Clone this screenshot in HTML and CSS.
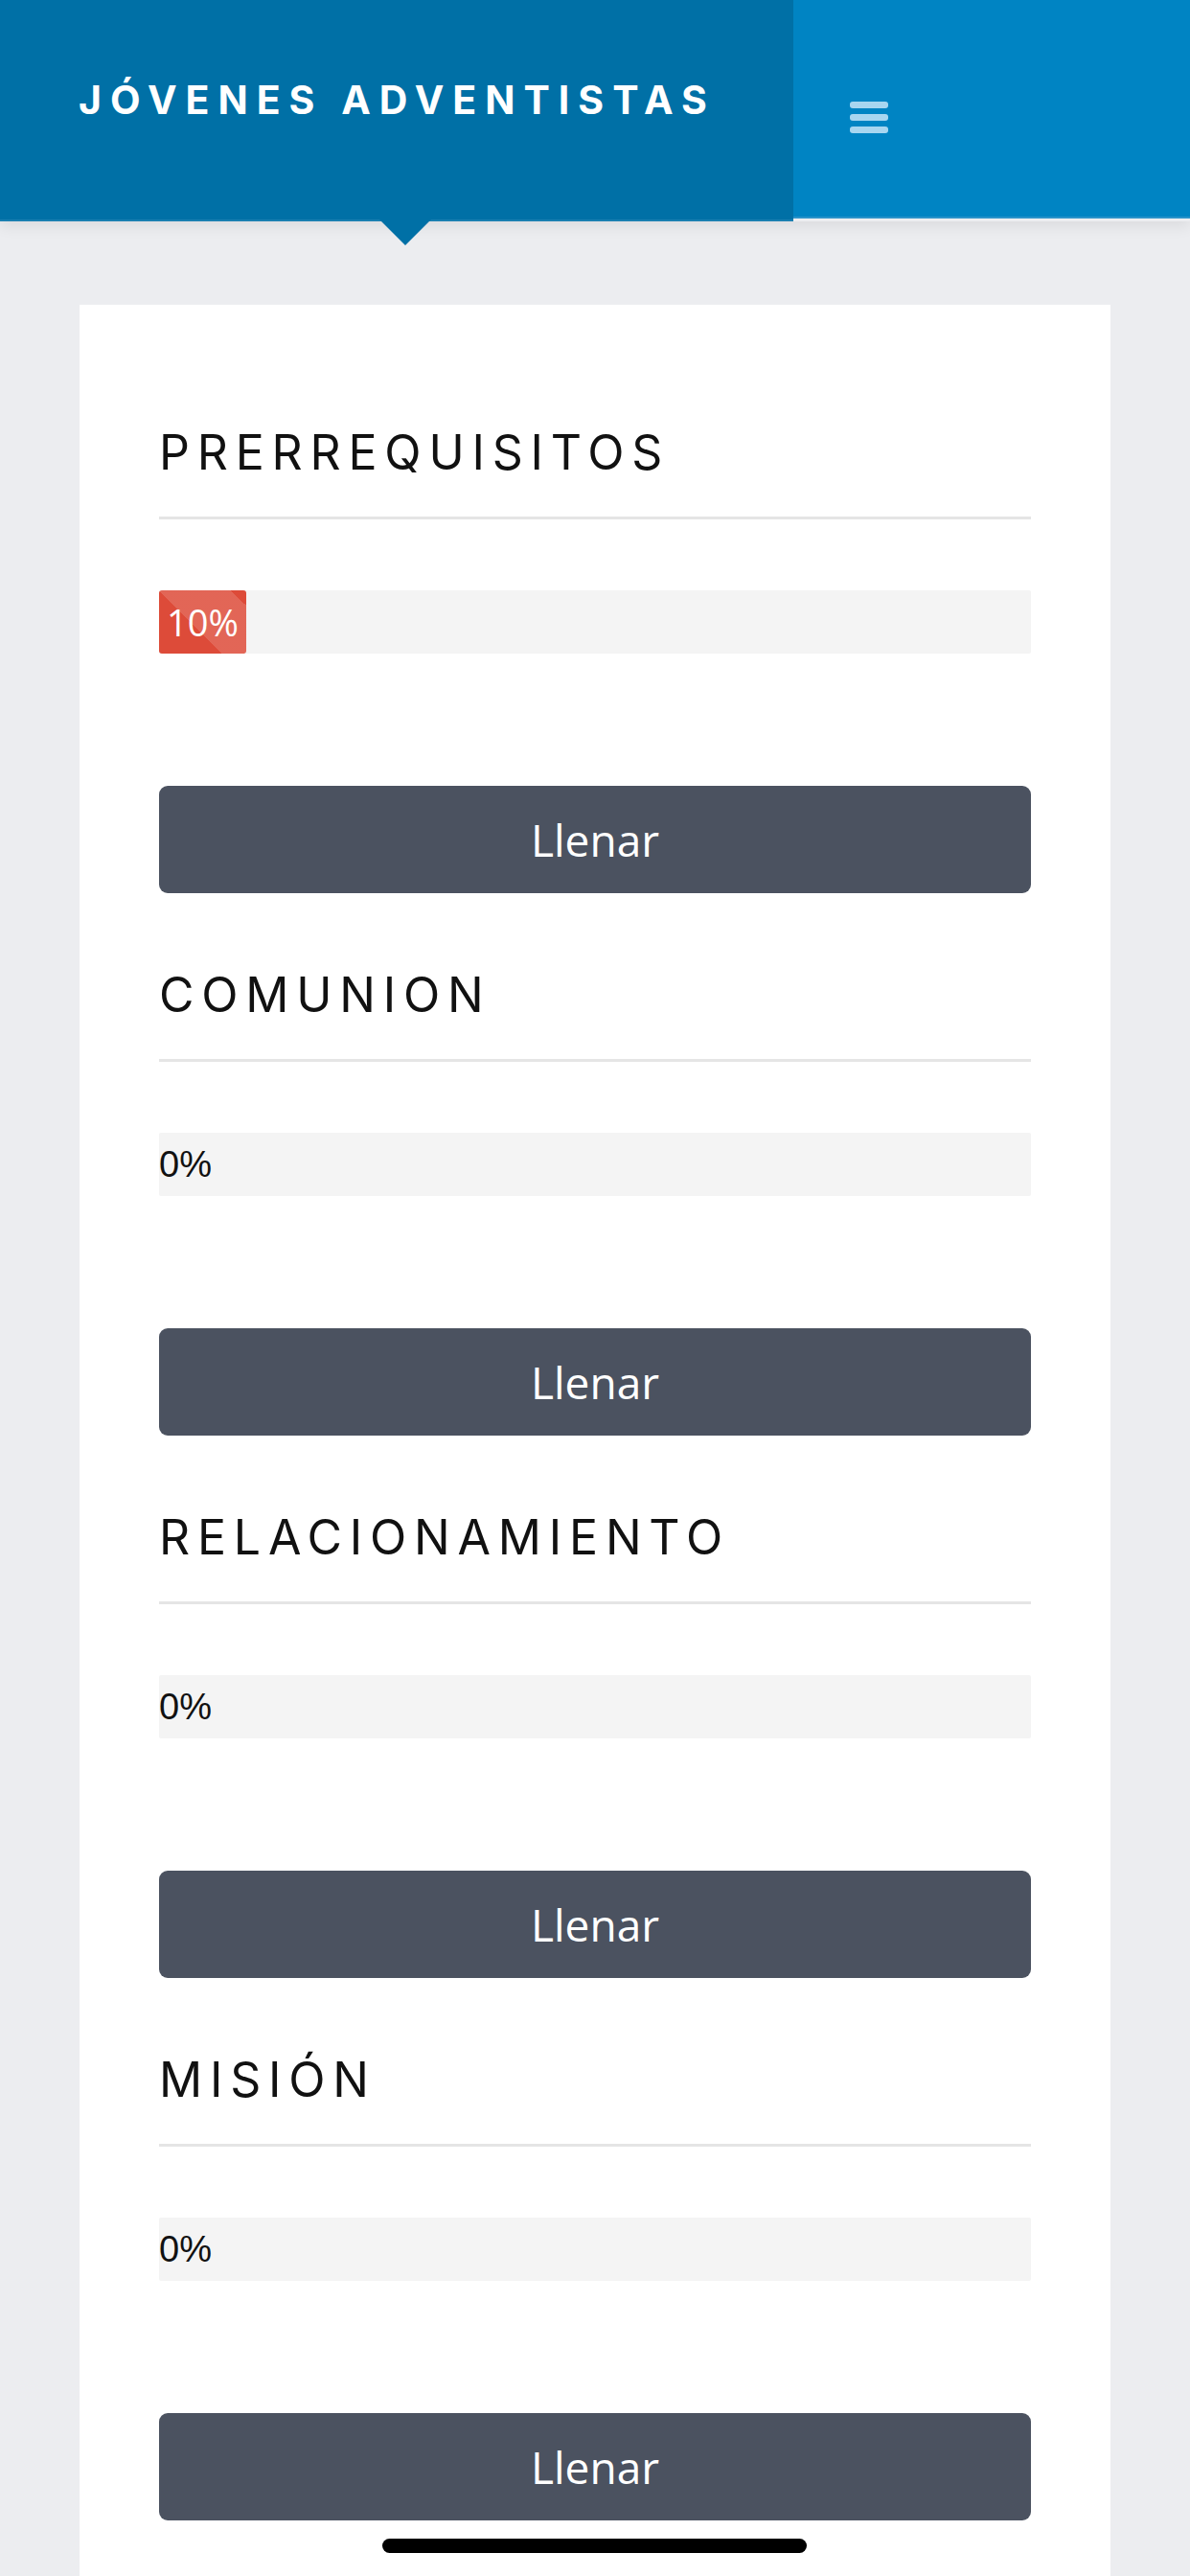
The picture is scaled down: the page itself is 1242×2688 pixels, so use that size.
FILE: index.html
```html
<!DOCTYPE html>
<html lang="es">
<head>
<meta charset="utf-8">
<title>Jóvenes Adventistas</title>
<link rel="stylesheet" href="styles.css">
</head>
<body>
<header class="topbar">
  <div class="brand"><span class="brand-text">JÓVENES ADVENTISTAS</span></div>
  <nav class="navbar">
    <button class="menu-toggle" aria-label="Menú">
      <span class="menu-bar"></span>
      <span class="menu-bar"></span>
      <span class="menu-bar"></span>
    </button>
  </nav>
</header>
<main class="content">
  <div class="card">
    <section class="block">
      <h2 class="block-title">PRERREQUISITOS</h2>
      <div class="progress">
        <div class="progress-fill striped" style="width:10%">10%</div>
      </div>
      <button class="btn-fill">Llenar</button>
    </section>
    <section class="block">
      <h2 class="block-title">COMUNION</h2>
      <div class="progress">
        <span class="progress-empty">0%</span>
      </div>
      <button class="btn-fill">Llenar</button>
    </section>
    <section class="block">
      <h2 class="block-title">RELACIONAMIENTO</h2>
      <div class="progress">
        <span class="progress-empty">0%</span>
      </div>
      <button class="btn-fill">Llenar</button>
    </section>
    <section class="block">
      <h2 class="block-title">MISIÓN</h2>
      <div class="progress">
        <span class="progress-empty">0%</span>
      </div>
      <button class="btn-fill">Llenar</button>
    </section>
  </div>
</main>
<div class="home-indicator"></div>
</body>
</html>
```

FILE: styles.css
```css
* { box-sizing: border-box; }
html, body { margin: 0; padding: 0; }
body {
  background: #ecedf0;
  font-family: "Open Sans", "Liberation Sans", sans-serif;
  height: 2688px;
  overflow: hidden;
}

.topbar {
  display: flex;
  align-items: flex-start;
  height: 231px;
  position: relative;
  box-shadow: 0 6px 14px rgba(0, 0, 0, 0.07);
}
.brand {
  position: relative;
  width: 828px;
  height: 231px;
  background: #0070a6;
  border-bottom: 2px solid #1a7fb1;
  padding: 76px 0 0 82px;
}
.brand::after {
  content: "";
  position: absolute;
  left: 396px;
  top: 229px;
  border-left: 27px solid transparent;
  border-right: 27px solid transparent;
  border-top: 27px solid #0070a6;
}
.brand-text {
  display: block;
  font-family: Inter, "Liberation Sans", sans-serif;
  font-weight: 700;
  font-size: 41px;
  line-height: 56px;
  letter-spacing: 9px;
  color: #ffffff;
}
.navbar {
  flex: 1;
  height: 228px;
  background: #0084c3;
  border-bottom: 2px solid #2a93c9;
  padding: 106px 0 0 59px;
}
.menu-toggle {
  display: flex;
  flex-direction: column;
  gap: 6px;
  padding: 0;
  border: 0;
  background: transparent;
}
.menu-bar {
  display: block;
  width: 40px;
  height: 7px;
  border-radius: 3px;
  background: #a8d6f0;
}

.content {
  padding: 87px 83px 0 83px;
}
.card {
  background: #ffffff;
  padding: 126px 83px 200px 83px;
}
.block + .block {
  margin-top: 78px;
}
.block-title {
  margin: 0;
  font-family: Inter, "Liberation Sans", sans-serif;
  font-weight: 400;
  font-size: 50px;
  line-height: 56px;
  letter-spacing: 7.8px;
  color: #111111;
  padding-bottom: 39px;
  border-bottom: 3px solid #e5e5e5;
}
.progress {
  margin-top: 74px;
  height: 66px;
  background: #f4f4f4;
  border-radius: 2px;
  display: flex;
  align-items: center;
}
.progress-fill {
  height: 100%;
  background-color: #dd4b39;
  border-radius: 3px;
  color: #ffffff;
  font-family: "Open Sans", sans-serif;
  font-size: 38px;
  display: flex;
  align-items: center;
  justify-content: center;
}
.striped {
  background-image: linear-gradient(45deg,
    rgba(255,255,255,0.15) 25%, transparent 25%, transparent 50%,
    rgba(255,255,255,0.15) 50%, rgba(255,255,255,0.15) 75%,
    transparent 75%, transparent);
  background-size: 150px 150px;
}
.progress-empty {
  font-family: "Liberation Sans", Arial, sans-serif;
  font-size: 38px;
  color: #111111;
}
.btn-fill {
  display: block;
  width: 100%;
  margin-top: 138px;
  height: 112px;
  border: 0;
  border-radius: 9px;
  background: #4b5260;
  color: #ffffff;
  font-family: "Open Sans", sans-serif;
  font-size: 46px;
  padding: 0;
}

.home-indicator {
  position: fixed;
  left: 399px;
  top: 2649px;
  width: 443px;
  height: 15px;
  border-radius: 8px;
  background: #000000;
}
```
